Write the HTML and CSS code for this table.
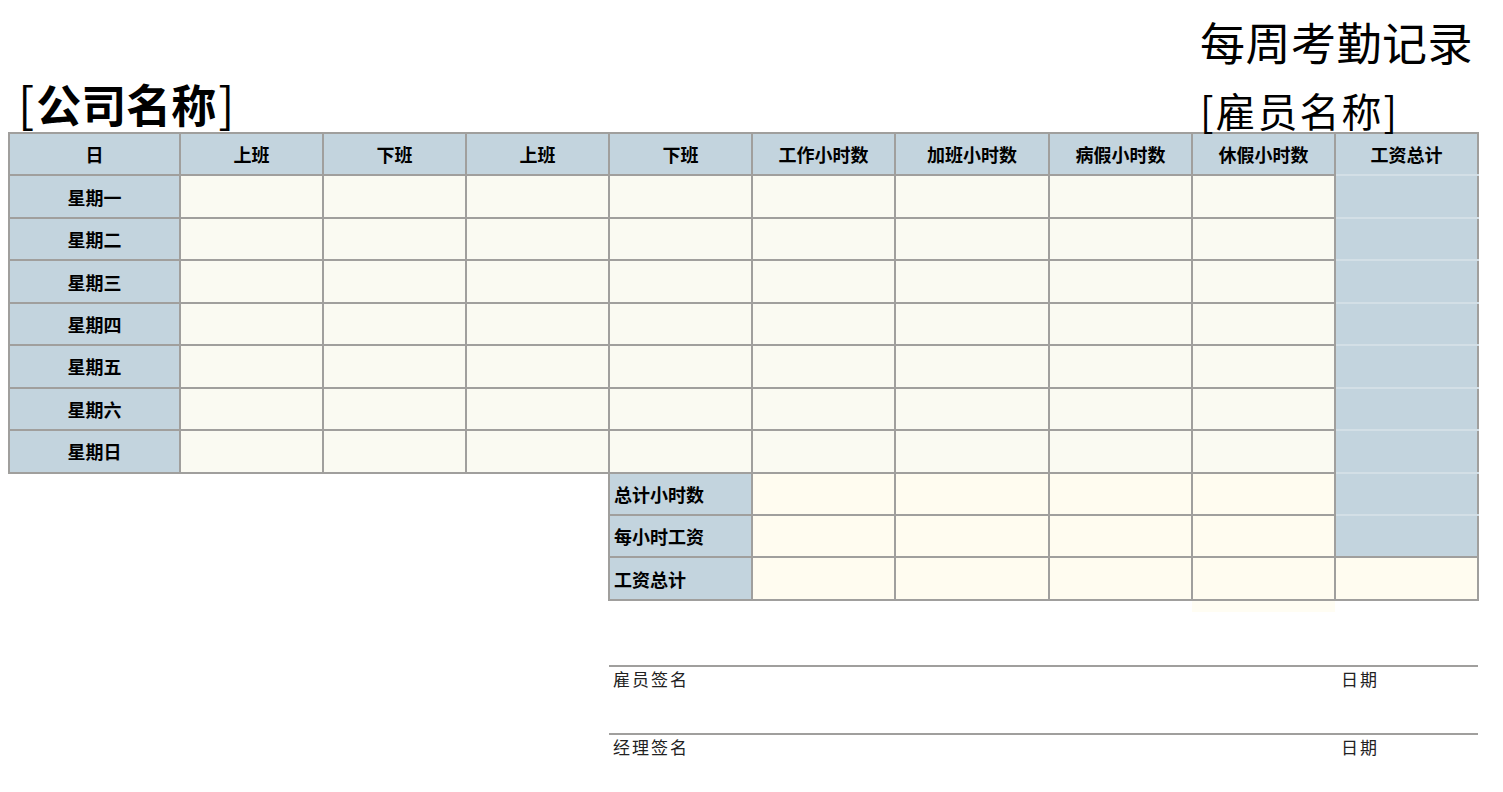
FILE: index.html
```html
<!DOCTYPE html>
<html lang="zh-CN">
<head>
<meta charset="utf-8">
<title>每周考勤记录</title>
<link rel="stylesheet" href="styles.css">
</head>
<body>
<div class="page">
  <header class="top">
    <div class="company"><span class="br">[</span>公司名称<span class="br">]</span></div>
    <div class="right">
      <div class="title">每周考勤记录</div>
      <div class="employee">[雇员名称]</div>
    </div>
  </header>

  <table class="sheet">
    <colgroup>
      <col class="c-day"><col class="c"><col class="c"><col class="c"><col class="c"><col class="c"><col class="c-wide"><col class="c"><col class="c"><col class="c-last">
    </colgroup>
    <tr class="head">
      <th>日</th><th>上班</th><th>下班</th><th>上班</th><th>下班</th><th>工作小时数</th><th>加班小时数</th><th>病假小时数</th><th>休假小时数</th><th class="total">工资总计</th>
    </tr>
    <tr><th class="day">星期一</th><td></td><td></td><td></td><td></td><td></td><td></td><td></td><td></td><td class="total"></td></tr>
    <tr><th class="day">星期二</th><td></td><td></td><td></td><td></td><td></td><td></td><td></td><td></td><td class="total"></td></tr>
    <tr><th class="day">星期三</th><td></td><td></td><td></td><td></td><td></td><td></td><td></td><td></td><td class="total"></td></tr>
    <tr><th class="day">星期四</th><td></td><td></td><td></td><td></td><td></td><td></td><td></td><td></td><td class="total"></td></tr>
    <tr><th class="day">星期五</th><td></td><td></td><td></td><td></td><td></td><td></td><td></td><td></td><td class="total"></td></tr>
    <tr><th class="day">星期六</th><td></td><td></td><td></td><td></td><td></td><td></td><td></td><td></td><td class="total"></td></tr>
    <tr><th class="day">星期日</th><td></td><td></td><td></td><td></td><td></td><td></td><td></td><td></td><td class="total"></td></tr>
    <tr>
      <td class="blank" colspan="4" rowspan="3"></td>
      <th class="label">总计小时数</th><td class="sum"></td><td class="sum"></td><td class="sum"></td><td class="sum"></td><td class="total"></td>
    </tr>
    <tr>
      <th class="label">每小时工资</th><td class="sum"></td><td class="sum"></td><td class="sum"></td><td class="sum"></td><td class="total total-end"></td>
    </tr>
    <tr>
      <th class="label">工资总计</th><td class="sum"></td><td class="sum"></td><td class="sum"></td><td class="sum"></td><td class="sum"></td>
    </tr>
    <tr class="ghost-row">
      <td class="blank" colspan="8"></td><td class="ghost"></td><td class="blank"></td>
    </tr>
  </table>

  <section class="signs">
    <div class="sigline"><span class="sig-name">雇员签名</span><span class="sig-date">日期</span></div>
    <div class="sigline"><span class="sig-name">经理签名</span><span class="sig-date">日期</span></div>
  </section>
</div>
</body>
</html>
```

FILE: styles.css
```css
html, body {
  margin: 0;
  padding: 0;
  background: #ffffff;
}

body {
  font-family: "Noto Sans CJK SC", "Liberation Sans", sans-serif;
  color: #000;
}

.page {
  padding: 0 8px;
}

.top {
  display: flex;
  justify-content: space-between;
  align-items: flex-end;
  width: 1470px;
  height: 132px;
}

.company {
  font-family: "Noto Sans CJK SC", sans-serif;
  font-weight: 700;
  font-size: 45px;
  line-height: 1;
  margin-left: 8px;
  padding-bottom: 6px;
}

.company .br {
  font-weight: 400;
  font-size: 48px;
  margin: 0 2px;
}

.right {
  width: 278px;
  display: flex;
  flex-direction: column;
}

.title {
  font-family: "Noto Sans CJK SC", serif;
  font-weight: 400;
  font-size: 45px;
  line-height: 1;
  letter-spacing: 0.5px;
}

.employee {
  font-family: "Noto Sans CJK SC", serif;
  font-weight: 400;
  font-size: 40px;
  line-height: 1;
  margin-top: 26px;
  padding-bottom: 2px;
  letter-spacing: 2px;
}

.sheet {
  border-collapse: collapse;
  table-layout: fixed;
  width: 1470px;
}

.c-day { width: 171px; }
.c { width: 143px; }
.c-wide { width: 154px; }
.c-last { width: 143px; }

.sheet tr {
  height: 42.45px;
}

.sheet th,
.sheet td {
  border: 2px solid #a09f9d;
  padding: 0;
  background: #fafaf2;
}

.sheet th {
  font-size: 18px;
  font-weight: 700;
  text-align: center;
  vertical-align: middle;
  background: #c3d4de;
}

.sheet .head th {
  vertical-align: top;
  padding-top: 7px;
}

.sheet .label {
  text-align: left;
  padding-left: 4px;
}

.sheet td.total {
  background: #c3d4de;
  border-bottom-color: #d3dfe6;
  border-top-color: #d3dfe6;
}

.sheet .head th.total {
  border-bottom-color: #d3dfe6;
}

.sheet td.total-end {
  border-bottom-color: #a09f9d;
}

.sheet td.sum {
  background: #fffcf0;
}

.sheet td.blank {
  border: none;
  background: transparent;
}

.sheet .ghost-row {
  height: 12px;
}

.sheet td.ghost {
  border: none;
  background: #fffdf3;
}

.signs {
  margin-left: 601px;
  width: 869px;
  margin-top: 53px;
  display: flex;
  flex-direction: column;
  gap: 42px;
}

.sigline {
  display: flex;
  justify-content: space-between;
  border-top: 2px solid #a09f9d;
  font-size: 17px;
  line-height: 24px;
  color: #222;
}

.sig-name {
  padding-left: 4px;
  letter-spacing: 2px;
}

.sig-date {
  width: 137px;
  letter-spacing: 2px;
}
```
